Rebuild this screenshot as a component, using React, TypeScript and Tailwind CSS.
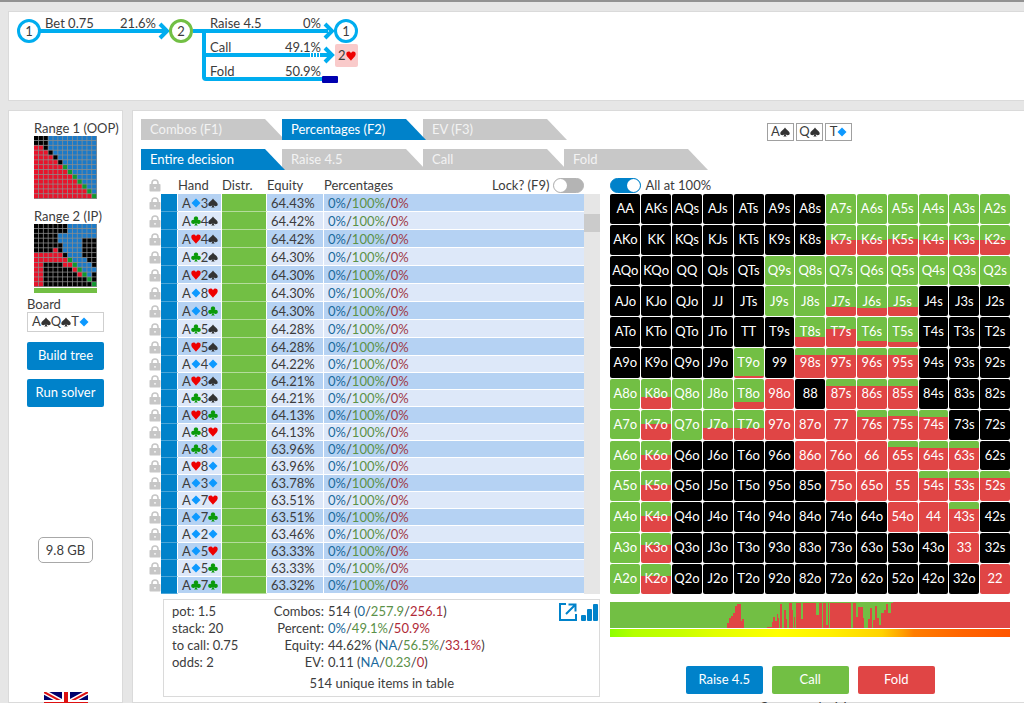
import { useState } from "react";
import clsx from "clsx";

type Suit = "s" | "h" | "d" | "c";

const RANKS = "AKQJT98765432".split("");

const suitPaths: Record<Suit, { d: string; className: string; name: string }> = {
  s: {
    name: "spades",
    className: "fill-[#333333]",
    d: "M5 0.4C5.5 2 9.7 4 9.7 6.4C9.7 8.3 7.2 8.7 5.7 7.3C5.8 8.4 6.2 9.1 7 9.6H3C3.8 9.1 4.2 8.4 4.3 7.3C2.8 8.7 0.3 8.3 0.3 6.4C0.3 4 4.5 2 5 0.4Z",
  },
  h: {
    name: "hearts",
    className: "fill-[#ee0000]",
    d: "M5 9.8C4.4 8.1 0.3 5.6 0.3 2.9C0.3 0.2 4.1 -0.2 5 2.2C5.9 -0.2 9.7 0.2 9.7 2.9C9.7 5.6 5.6 8.1 5 9.8Z",
  },
  d: {
    name: "diamonds",
    className: "fill-[#0d99ff]",
    d: "M5 0.6L9.5 5L5 9.4L0.5 5Z",
  },
  c: {
    name: "clubs",
    className: "fill-[#0a9a0a]",
    d: "M5 0.4C7.1 0.4 7.8 2.5 6.5 4.1C8.3 3.3 9.8 4.4 9.8 6C9.8 8 7.2 8.7 5.6 7.1C5.7 8.3 6.1 9.1 7 9.6H3C3.9 9.1 4.3 8.3 4.4 7.1C2.8 8.7 0.2 8 0.2 6C0.2 4.4 1.7 3.3 3.5 4.1C2.2 2.5 2.9 0.4 5 0.4Z",
  },
};

// hand, equity
const hands: [string, string][] = [
  ["Ad3s", "64.43%"],
  ["Ac4s", "64.42%"],
  ["Ah4s", "64.42%"],
  ["Ac2s", "64.30%"],
  ["Ah2s", "64.30%"],
  ["Ad8h", "64.30%"],
  ["Ad8c", "64.30%"],
  ["Ac5s", "64.28%"],
  ["Ah5s", "64.28%"],
  ["Ad4d", "64.22%"],
  ["Ah3s", "64.21%"],
  ["Ac3s", "64.21%"],
  ["Ah8c", "64.13%"],
  ["Ac8h", "64.13%"],
  ["Ac8d", "63.96%"],
  ["Ah8d", "63.96%"],
  ["Ad3d", "63.78%"],
  ["Ad7h", "63.51%"],
  ["Ad7c", "63.51%"],
  ["Ad2d", "63.46%"],
  ["Ad5h", "63.33%"],
  ["Ad5c", "63.33%"],
  ["Ac7c", "63.32%"],
];

// fold percentage for every hand in range, the rest of the hand calls
const foldFreq: Record<string, number> = {
  A7s: 0, A6s: 0, A5s: 0, A4s: 0, A3s: 0, A2s: 0,
  K7s: 49, K6s: 51, K5s: 52, K4s: 51, K3s: 51, K2s: 51,
  Q9s: 0, Q8s: 0, Q7s: 0, Q6s: 0, Q5s: 0, Q4s: 0, Q3s: 0, Q2s: 0,
  J9s: 0, J8s: 0, J7s: 30, J6s: 26, J5s: 30,
  T8s: 33, T7s: 60, T6s: 21, T5s: 16,
  T9o: 8, "98s": 76, "97s": 76, "96s": 76, "95s": 76,
  A8o: 0, K8o: 40, Q8o: 0, J8o: 0, T8o: 25, "98o": 100, "87s": 76, "86s": 76, "85s": 78,
  A7o: 0, K7o: 53, Q7o: 0, J7o: 39, T7o: 41, "97o": 100, "87o": 100, "77": 100, "76s": 77, "75s": 80, "74s": 77,
  A6o: 0, K6o: 52, "86o": 100, "76o": 100, "66": 100, "65s": 79, "64s": 76, "63s": 77,
  A5o: 0, K5o: 54, "75o": 100, "65o": 100, "55": 100, "54s": 76, "53s": 76, "52s": 77,
  A4o: 0, K4o: 54, "54o": 100, "44": 100, "43s": 77,
  A3o: 0, K3o: 59, "33": 100,
  A2o: 0, K2o: 60, "22": 100,
};

// k black, b blue, r red, g green
const rangeOop = [
  "kkkbbbbbbbbbb",
  "kkkbbbbbbbbbb",
  "rrkbbbbbbbbbb",
  "rrrkbbbbbbbbb",
  "rrrrkbbbbbbbb",
  "rrrrrkbbbbbbb",
  "rrrrrrgbbbbbb",
  "rrrrrrrgbbbbb",
  "rrrrrrrrgbbbb",
  "rrrrrrrrrgbbb",
  "rrrrrrrrrrgbb",
  "rrrrrrrrrrrgb",
  "rrrrrrrrrrrrg",
];

const rangeIp = [
  "kkkkkkkbbbbbb",
  "kkkkkkkbbbbbb",
  "kkkkkbbbbbbbb",
  "kkkkkbbbbbkkk",
  "kkkkkkbbbbkkk",
  "kkkkrkbbbbkkk",
  "rrrrrrkbbbkkk",
  "rrrrrrrgbbbkk",
  "rrkkkkrrgbbbk",
  "rrkkkkkkrgbbb",
  "rrkkkkkkkrgbk",
  "rrkkkkkkkkkgk",
  "rrkkkkkkkkkkg",
];

const rangeFill: Record<string, string> = {
  k: "fill-black",
  b: "fill-[#1b7ac8]",
  r: "fill-[#e8132b]",
  g: "fill-[#0f9a2e]",
};

// x, width, height of the folding part
const foldBars: [number, number, number][] = [
  [117, 2, 5], [119, 2, 10], [121, 2, 12], [123, 2, 15], [125, 2, 22], [127, 4, 24], [131, 1, 7], [132, 2, 9],
  [157, 5, 1], [162, 1, 6], [163, 2, 11], [165, 2, 7], [167, 1, 14], [168, 1, 10], [170, 2, 24], [174, 2, 18],
  [176, 1, 9], [179, 3, 25], [182, 1, 18], [184, 1, 11], [186, 5, 25], [191, 2, 9], [193, 13, 25],
  [206, 3, 13], [209, 3, 25], [213, 3, 25], [216, 2, 3], [218, 1, 25], [220, 21, 25], [243, 3, 25], [246, 2, 11],
  [248, 5, 21], [253, 1, 10], [258, 2, 9], [260, 2, 20], [263, 2, 8], [265, 2, 22], [267, 2, 10], [269, 2, 3],
  [271, 3, 15], [274, 2, 18], [276, 2, 24], [278, 3, 15], [281, 2, 25], [283, 117, 26],
];

function SuitIcon({ suit }: { suit: Suit }) {
  const { d, className, name } = suitPaths[suit];
  return (
    <svg viewBox="0 0 10 10" className={clsx("size-[10px] shrink-0", className)} role="img" aria-label={name}>
      <path d={d} />
    </svg>
  );
}

function Cards({ value }: { value: string }) {
  const cards = value.match(/../g) ?? [];
  return (
    <span className="inline-flex items-center">
      {cards.map((card) => (
        <span key={card} className="inline-flex items-center">
          {card[0]}
          <SuitIcon suit={card[1] as Suit} />
        </span>
      ))}
    </span>
  );
}

function LockIcon() {
  return (
    <svg viewBox="0 0 12 13" className="h-[13px] w-3" aria-hidden="true">
      <path d="M3 6V4a3 3 0 0 1 6 0v2" fill="none" stroke="#c6c6c6" strokeWidth="1.6" />
      <rect x="0.5" y="5" width="11" height="7.5" rx="0.8" fill="#c6c6c6" />
      <circle cx="6" cy="8.8" r="0.9" fill="#fff" />
    </svg>
  );
}

function Toggle({ id, defaultChecked }: { id: string; defaultChecked?: boolean }) {
  return (
    <input
      id={id}
      type="checkbox"
      role="switch"
      defaultChecked={defaultChecked}
      className="h-[15px] w-[31px] shrink-0 appearance-none rounded-full border border-[#b4b4b4] bg-[#b4b4b4] before:block before:size-[13px] before:rounded-full before:bg-white before:content-[''] checked:border-[#0082ca] checked:bg-[#0082ca] checked:before:translate-x-4"
    />
  );
}

function Tabs({ tabs, initial }: { tabs: string[]; initial: number }) {
  const [active, setActive] = useState(initial);
  return (
    <div role="tablist" className="flex">
      {tabs.map((tab, i) => (
        <button
          key={tab}
          role="tab"
          aria-selected={i === active}
          onClick={() => setActive(i)}
          className={clsx(
            "-mr-[3px] h-[21px] w-[144px] pl-[9px] text-left [clip-path:polygon(0_0,124px_0,100%_100%,0_100%)]",
            i === active ? "relative z-10 bg-[#0082ca] text-white" : "bg-[#c8c8c8] text-[#f3f3f3]"
          )}
        >
          {tab}
        </button>
      ))}
    </div>
  );
}

function RangePreview({ rows, label }: { rows: string[]; label: string }) {
  return (
    <svg viewBox="0 0 65 65" className="size-[63px]" role="img" aria-label={label}>
      <rect width="65" height="65" fill="#8c8c8c" />
      {rows.map((row, y) =>
        row
          .split("")
          .map((cell, x) => (
            <rect key={`${x}-${y}`} x={x * 5} y={y * 5} width="4.2" height="4.2" className={rangeFill[cell]} />
          ))
      )}
    </svg>
  );
}

function DecisionTree() {
  return (
    <svg viewBox="0 0 360 80" className="h-20 w-[360px] fill-[#3c3c3c] text-[13px]" role="img" aria-label="Decision tree">
      <g fill="none" stroke="#00adef" strokeWidth="4">
        <path d="M30 19H155M183 19H318M194 19V65a2 2 0 0 0 2 2H312M194 43H300" />
        <path d="M301 43H313" strokeDasharray="2 1" />
        <path d="M312 43H320" />
        <path d="M150 12L157 19L150 26M315 12L322 19L315 26M315 36L322 43L315 50" />
      </g>
      <rect x="312" y="64" width="16" height="7" rx="1" fill="#0000b0" />
      <g fill="#fff" strokeWidth="3">
        <circle cx="19" cy="19" r="10.5" stroke="#00adef" />
        <circle cx="171" cy="19" r="10.5" stroke="#72bf44" />
        <circle cx="336" cy="19" r="10.5" stroke="#00adef" />
      </g>
      <rect x="325" y="32" width="23" height="23" rx="2" fill="#f9caca" />
      <g textAnchor="middle">
        <text x="19" y="24">1</text>
        <text x="171" y="24">2</text>
        <text x="336" y="24">1</text>
      </g>
      <text x="328" y="48">2</text>
      <path transform="translate(336 39)" d={suitPaths.h.d} fill="#ee0000" />
      <text x="35" y="16">Bet 0.75</text>
      <text x="200" y="16">Raise 4.5</text>
      <text x="200" y="40">Call</text>
      <text x="200" y="64">Fold</text>
      <g textAnchor="end">
        <text x="146" y="16">21.6%</text>
        <text x="311" y="16">0%</text>
        <text x="311" y="40">49.1%</text>
        <text x="311" y="64">50.9%</text>
      </g>
    </svg>
  );
}

function UnionJack() {
  return (
    <svg viewBox="0 0 44 24" className="h-6 w-11 shrink-0" role="img" aria-label="English">
      <rect width="44" height="24" fill="#00006b" />
      <path d="M0 0L44 24M44 0L0 24" stroke="#fff" strokeWidth="5" />
      <path d="M0 0L44 24M44 0L0 24" stroke="#dd1111" strokeWidth="2" />
      <path d="M22 0V24M0 12H44" stroke="#fff" strokeWidth="8" />
      <path d="M22 0V24M0 12H44" stroke="#dd1111" strokeWidth="4" />
    </svg>
  );
}

function Sidebar() {
  return (
    <aside className="flex w-[115px] shrink-0 flex-col items-center border border-[#dadada] bg-white pt-[9px]">
      <div className="flex w-[63px] flex-col">
        <span className="leading-4 whitespace-nowrap">Range 1 (OOP)</span>
        <RangePreview rows={rangeOop} label="Range 1" />
        <span className="mt-[9px] leading-4 whitespace-nowrap">Range 2 (IP)</span>
        <RangePreview rows={rangeIp} label="Range 2" />
        <div className="mt-px h-[5px] bg-[#72bf44]"></div>
      </div>
      <div className="mt-[3px] flex w-[77px] flex-col">
        <span className="leading-4">Board</span>
        <button className="flex h-5 items-center border border-[#cfcfcf] pl-1">
          <Cards value="AsQsTd" />
        </button>
        <button className="mt-[10px] h-7 rounded-[2px] bg-[#0082ca] text-white">Build tree</button>
        <button className="mt-[9px] h-7 rounded-[2px] bg-[#0082ca] text-white">Run solver</button>
      </div>
      <span className="mt-[130px] rounded-[5px] border border-[#a8a8a8] px-[7px] py-1 leading-4">9.8 GB</span>
      <div className="mt-[129px]">
        <UnionJack />
      </div>
    </aside>
  );
}

function HandTable() {
  return (
    <div className="flex pl-2">
      <table className="flex-1 table-fixed border-separate border-spacing-0 text-left">
        <colgroup>
          <col className="w-3" />
          <col className="w-[17px]" />
          <col className="w-11" />
          <col className="w-[45px]" />
          <col className="w-[57px]" />
          <col />
        </colgroup>
        <thead>
          <tr className="h-[17px] leading-[17px]">
            <th className="p-0">
              <LockIcon />
            </th>
            <th className="p-0"></th>
            <th className="p-0 font-normal">Hand</th>
            <th className="p-0 font-normal">Distr.</th>
            <th className="p-0 font-normal">Equity</th>
            <th className="p-0 font-normal">
              <div className="flex h-[17px] items-center">
                Percentages
                <label htmlFor="lock" className="mr-1 ml-auto">
                  Lock? (F9)
                </label>
                <Toggle id="lock" />
              </div>
            </th>
          </tr>
        </thead>
        <tbody>
          {hands.map(([hand, equity], i) => (
            <tr
              key={hand}
              className={clsx("leading-4", i < 9 ? "h-[18px]" : "h-[17px]", i % 2 ? "bg-[#dde8f9]" : "bg-[#b5d2f3]")}
            >
              <td className="bg-white p-0">
                <LockIcon />
              </td>
              <td className="border-r border-b border-r-white border-b-[#4ba6d9] bg-[#0082ca] p-0"></td>
              <td className="border-r border-b border-white p-0 pl-1">
                <div className="flex items-center">
                  <Cards value={hand} />
                </div>
              </td>
              <td className="border-r border-b border-r-white border-b-[#b4dc9c] bg-[#72bf44] p-0"></td>
              <td className="border-r border-b border-white p-0 pl-1">{equity}</td>
              <td className="border-b border-white p-0 pl-1">
                <span className="text-[#1a6a9c]">0%</span>/<span className="text-[#5b9148]">100%</span>/
                <span className="text-[#a03a48]">0%</span>
              </td>
            </tr>
          ))}
        </tbody>
      </table>
      <div className="mt-[17px] w-4 bg-[#e6e6e6] pt-5">
        <div className="h-[18px] bg-[#cbcbcb]"></div>
      </div>
    </div>
  );
}

function Summary() {
  return (
    <div className="mt-[5px] ml-[22px] h-[98px] border border-[#dadada] pt-[3px] leading-[17px]">
      <div className="flex">
        <div className="w-[98px] pl-2">
          <p>pot: 1.5</p>
          <p>stack: 20</p>
          <p>to call: 0.75</p>
          <p>odds: 2</p>
        </div>
        <dl className="grid grid-cols-[62px_auto] gap-x-1">
          <dt className="text-right">Combos:</dt>
          <dd>
            514 (<span className="text-[#1a6a9c]">0</span>/<span className="text-[#5b9148]">257.9</span>/
            <span className="text-[#b02a38]">256.1</span>)
          </dd>
          <dt className="text-right">Percent:</dt>
          <dd>
            <span className="text-[#1a6a9c]">0%</span>/<span className="text-[#5b9148]">49.1%</span>/
            <span className="text-[#b02a38]">50.9%</span>
          </dd>
          <dt className="text-right">Equity:</dt>
          <dd>
            44.62% (<span className="text-[#1a6a9c]">NA</span>/<span className="text-[#5b9148]">56.5%</span>/
            <span className="text-[#b02a38]">33.1%</span>)
          </dd>
          <dt className="text-right">EV:</dt>
          <dd>
            0.11 (<span className="text-[#1a6a9c]">NA</span>/<span className="text-[#5b9148]">0.23</span>/
            <span className="text-[#b02a38]">0</span>)
          </dd>
        </dl>
        <div className="mr-px ml-auto flex h-[18px] gap-1">
          <button aria-label="Open in new window">
            <svg viewBox="0 0 18 18" className="size-[18px]" fill="none" stroke="#0082ca" strokeWidth="2">
              <path d="M7 1H1V17H17V11" />
              <path d="M7 11L16 2M9.5 1.5H16.5V8.5" />
            </svg>
          </button>
          <button aria-label="Show chart">
            <svg viewBox="0 0 17 18" className="h-[18px] w-[17px]" fill="#0082ca">
              <rect x="0" y="12" width="5" height="6" rx="1" />
              <rect x="6" y="6" width="5" height="12" rx="1" />
              <rect x="12" y="1" width="5" height="17" rx="1" />
            </svg>
          </button>
        </div>
      </div>
      <p className="mt-1 text-center">514 unique items in table</p>
    </div>
  );
}

function RangeMatrix() {
  return (
    <div className="grid grid-cols-13 gap-px">
      {RANKS.map((_, row) =>
        RANKS.map((_, col) => {
          const name =
            RANKS[Math.min(row, col)] + RANKS[Math.max(row, col)] + (row === col ? "" : col > row ? "s" : "o");
          const fold = foldFreq[name];
          return (
            <button
              key={name}
              className={clsx(
                "flex aspect-square items-center justify-center rounded-[2px] text-white",
                fold === undefined && "bg-black"
              )}
              style={
                fold === undefined
                  ? undefined
                  : { background: `linear-gradient(#72bf44 ${100 - fold}%, #e04545 ${100 - fold}%)` }
              }
            >
              {name}
            </button>
          );
        })
      )}
    </div>
  );
}

function ActionStrip() {
  return (
    <div className="mt-2">
      <svg
        viewBox="0 0 400 26"
        preserveAspectRatio="none"
        shapeRendering="crispEdges"
        className="h-[26px] w-full bg-[#72bf44]"
        role="img"
        aria-label="Actions per hand"
      >
        {foldBars.map(([x, width, height]) => (
          <rect key={x} x={x} y={26 - height} width={width} height={height} fill="#e04545" />
        ))}
      </svg>
      <div className="mt-px h-2 bg-[linear-gradient(90deg,#8cff00,#b4ff00_6%,#c8ff00_18%,#e1ff00_26%,#ffff00_42%,#fff000_55%,#ffd200_68%,#ffa000_73%,#ff7d00_76%,#ff6400_88%,#ff5500)]"></div>
    </div>
  );
}

export default function App() {
  return (
    <div className="flex h-screen flex-col overflow-hidden border-t-2 border-[#929292] bg-[#e6e6e6] font-[Lato,'Liberation_Sans',sans-serif] text-[13px] text-[#3c3c3c]">
      <header className="mt-[9px] ml-2 h-[90px] shrink-0 border border-r-0 border-[#dadada] bg-white pl-px">
        <DecisionTree />
      </header>
      <div className="mt-[9px] ml-2 flex min-h-0 flex-1 gap-[9px]">
        <Sidebar />
        <main className="min-w-0 flex-1 border border-r-0 border-[#dadada] bg-white pt-2 pr-[14px] pl-2">
          <div className="flex">
            <div className="flex flex-col gap-[9px]">
              <Tabs tabs={["Combos (F1)", "Percentages (F2)", "EV (F3)"]} initial={1} />
              <Tabs tabs={["Entire decision", "Raise 4.5", "Call", "Fold"]} initial={0} />
            </div>
            <div className="mt-1 ml-[62px] flex gap-[2px]">
              {["As", "Qs", "Td"].map((card) => (
                <div key={card} className="flex h-[18px] w-[27px] items-center justify-center border border-[#a0a0a0]">
                  <Cards value={card} />
                </div>
              ))}
            </div>
          </div>
          <div className="mt-[7px] flex gap-[10px]">
            <div className="min-w-0 flex-[46]">
              <HandTable />
              <Summary />
            </div>
            <div className="min-w-0 flex-[40]">
              <div className="flex h-[17px] items-center gap-1">
                <Toggle id="all" defaultChecked />
                <label htmlFor="all">All at 100%</label>
              </div>
              <RangeMatrix />
              <ActionStrip />
              <div className="mt-[29px] flex justify-center gap-[9px]">
                <button className="h-7 w-[77px] rounded-[2px] bg-[#0082ca] text-white">Raise 4.5</button>
                <button className="h-7 w-[77px] rounded-[2px] bg-[#72bf44] text-white">Call</button>
                <button className="h-7 w-[77px] rounded-[2px] bg-[#e04545] text-white">Fold</button>
              </div>
              <p className="mt-[5px] text-center leading-4">Compare decision</p>
            </div>
          </div>
        </main>
      </div>
    </div>
  );
}
